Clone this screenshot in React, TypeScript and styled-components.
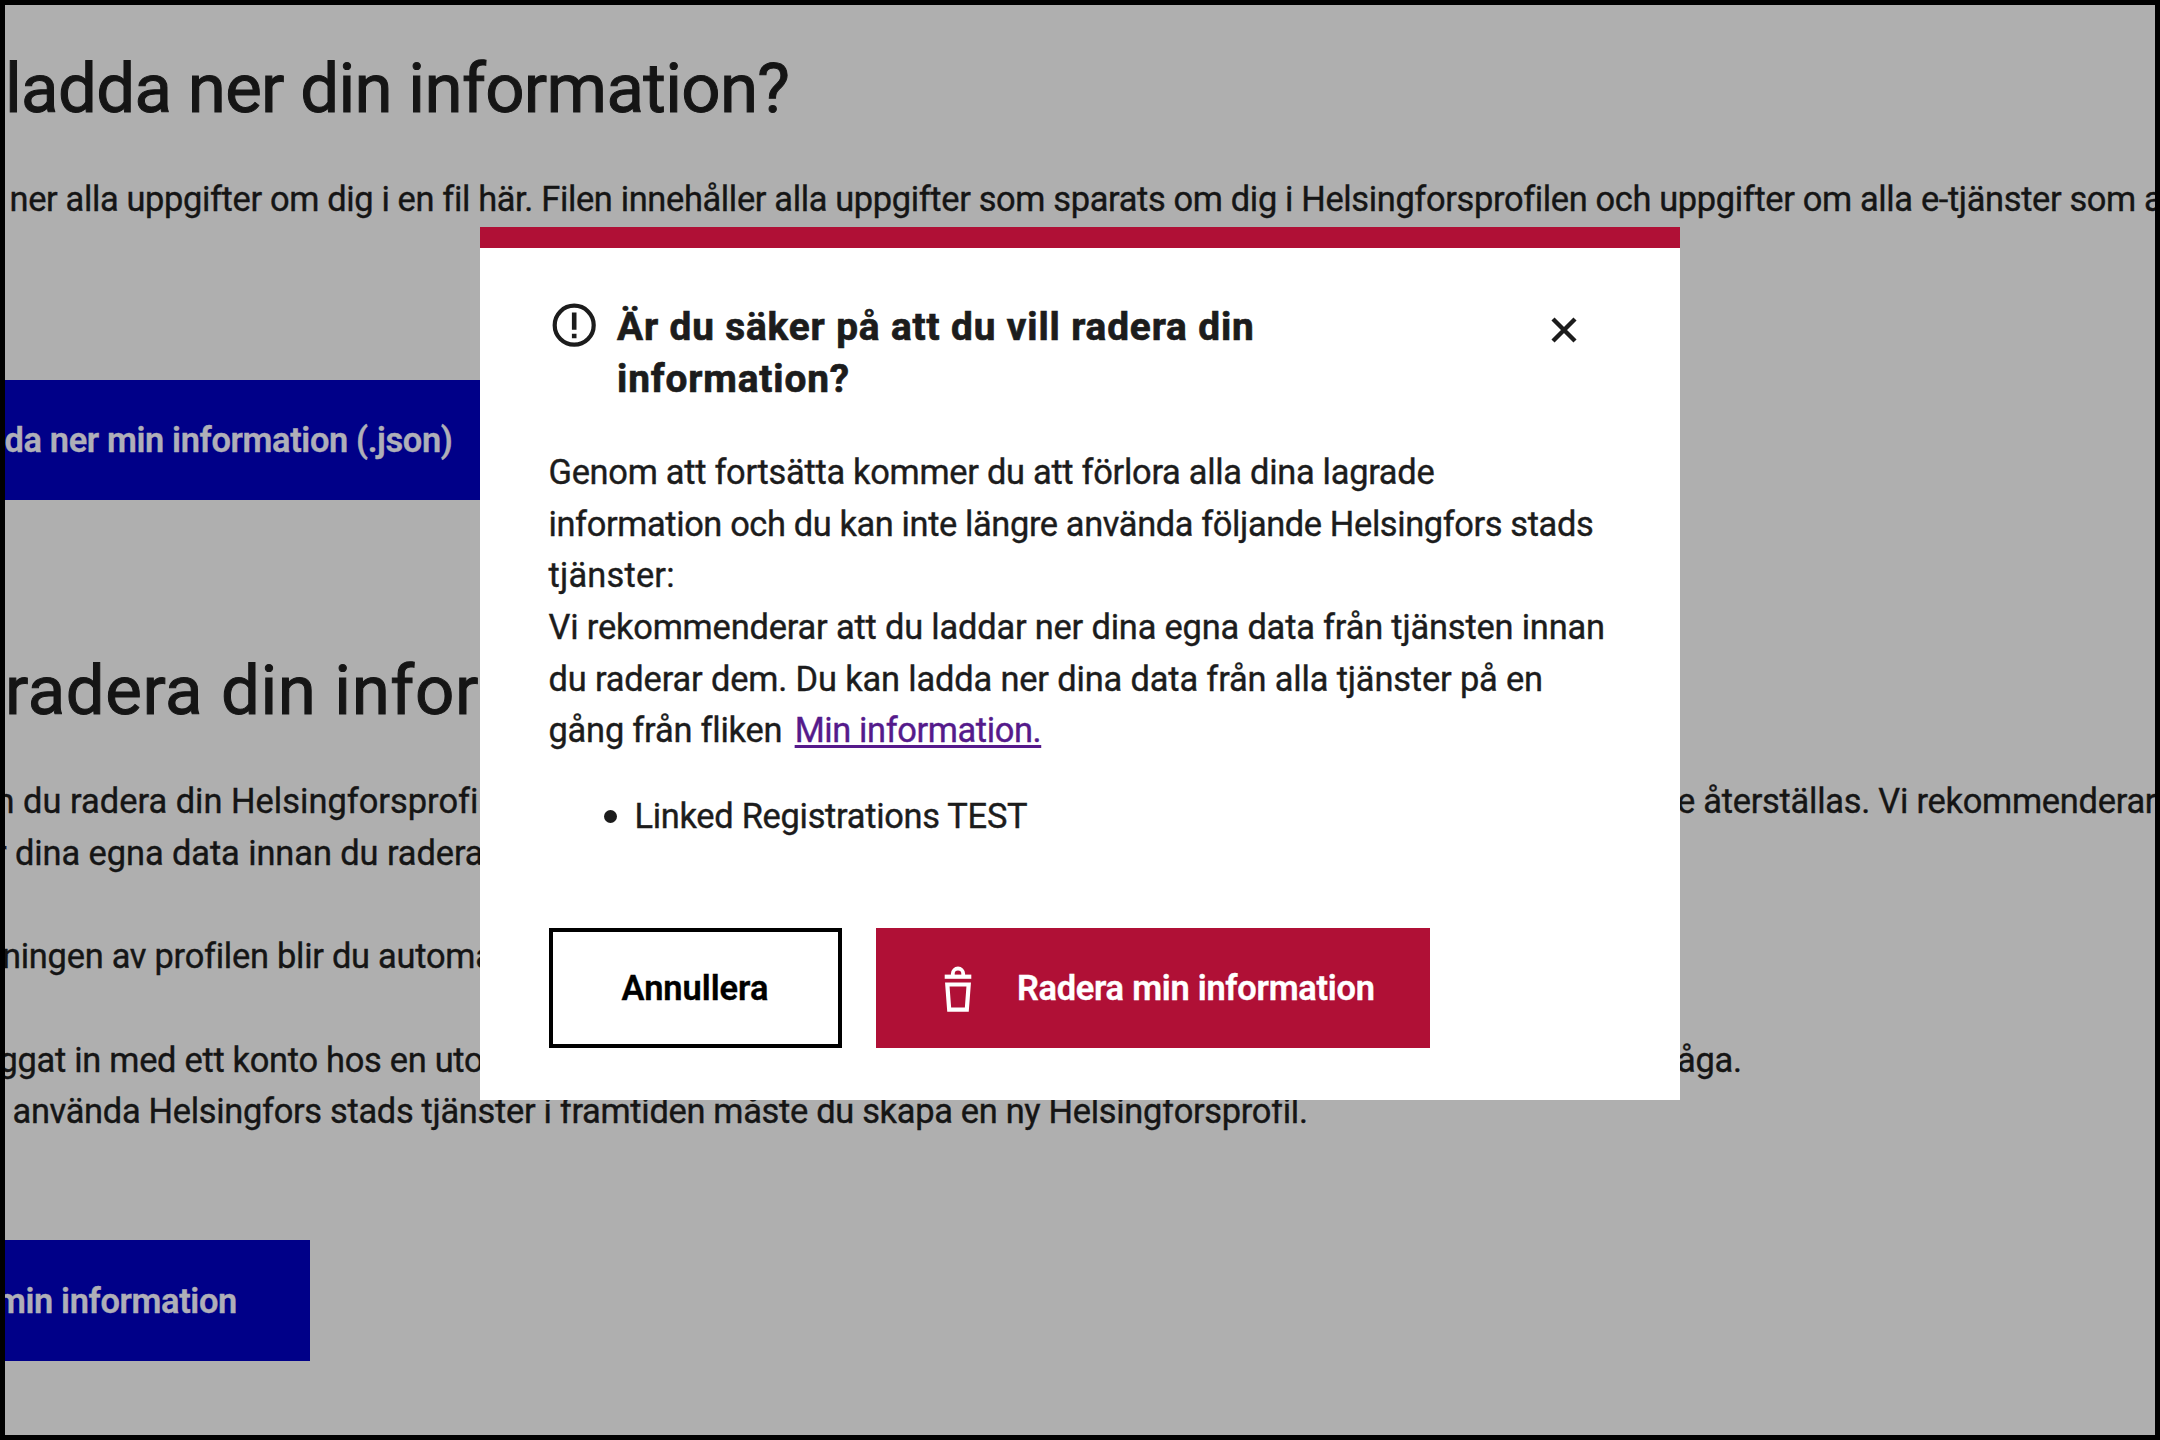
import React from 'react';
import styled, { createGlobalStyle } from 'styled-components';

const GlobalStyle = createGlobalStyle`
  *, *::before, *::after { box-sizing: border-box; }
  body { margin: 0; background: #000; }
`;

const LINE = '51.7px';

const Screen = styled.div`
  position: relative;
  width: 2160px;
  height: 1440px;
  border: 5px solid #000;
  overflow: hidden;
  background: #afafaf;
  color: #151515;
  font-family: Roboto, 'Liberation Sans', sans-serif;
  font-size: 34.4px;
  line-height: ${LINE};
  -webkit-text-stroke: 0.4px currentColor;
`;

const Page = styled.main`
  display: flex;
  flex-direction: column;
  align-items: flex-start;
  padding-top: 44px;
  white-space: nowrap;
`;

const Heading = styled.h2<{ $track: number }>`
  margin: 0;
  font-size: 69px;
  font-weight: 400;
  line-height: 80px;
  letter-spacing: ${p => p.$track}px;
  -webkit-text-stroke-width: 1px;
`;

const Copy = styled.div<{ $top: number }>`
  display: flex;
  flex-direction: column;
  margin-top: ${p => p.$top}px;
`;

const Line = styled.div<{ $indent?: number; $track?: number }>`
  display: grid;
  grid-template-columns: 1672px auto;
  height: ${LINE};
  letter-spacing: -0.25px;

  > span:first-child {
    margin-left: ${p => p.$indent ?? 0}px;
    letter-spacing: ${p => p.$track ?? -0.25}px;
  }
`;

const PageButton = styled.button<{ $top: number; $width: number; $indent: number }>`
  width: ${p => p.$width}px;
  height: 120.6px;
  margin: ${p => p.$top}px 0 0;
  padding: 2px 0 0;
  border: 0;
  background: #000088;
  color: #afafb8;
  font: 600 34.4px/${LINE} Roboto, 'Liberation Sans', sans-serif;
  letter-spacing: -0.36px;
  text-align: left;
  text-indent: ${p => p.$indent}px;
  white-space: nowrap;
`;

const SecondHeading = styled(Heading)`
  margin-top: 150.4px;
`;

const Dialog = styled.section`
  position: absolute;
  top: 222px;
  left: 474.5px;
  width: 1200.5px;
  height: 873.3px;
  padding: 53.4px 68.5px 0 69px;
  border-top: 21.5px solid #b01036;
  background: #fff;
  color: #1c1c1c;
  white-space: nowrap;
`;

const DialogHeader = styled.header`
  display: flex;
  align-items: flex-start;
`;

const HeaderIcon = styled.svg`
  flex: none;
  width: 52px;
  height: 52px;
`;

const AlertIcon = styled(HeaderIcon)`
  margin: -1px 0 0 -0.5px;
`;

const DialogTitle = styled.h3`
  flex: 1;
  margin: 0 0 0 17px;
  font-size: 38.75px;
  font-weight: 700;
  line-height: ${LINE};
  letter-spacing: 0.87px;
  -webkit-text-stroke-width: 0.7px;
`;

const CloseButton = styled.button`
  display: flex;
  margin: 3px 22px 0 0;
  padding: 0;
  border: 0;
  background: none;
  color: inherit;
`;

const DialogText = styled.div`
  margin-top: 42.1px;
`;

const TextLine = styled.div<{ $track: number }>`
  height: ${LINE};
  letter-spacing: ${p => p.$track}px;
`;

const InlineLink = styled.a`
  margin-left: 4px;
  color: #551a8b;
  letter-spacing: -0.38px;
  text-decoration: underline;
  text-decoration-thickness: 3px;
  text-decoration-skip-ink: none;
  text-underline-offset: 3px;
`;

const ServiceList = styled.ul`
  display: flex;
  flex-direction: column;
  margin: 34px 0 0;
  padding: 0 0 0 55.5px;
  list-style: none;
`;

const Service = styled.li`
  display: flex;
  align-items: center;
  gap: 17.5px;
  height: ${LINE};
  letter-spacing: -0.28px;

  &::before {
    content: '';
    flex: none;
    width: 13px;
    height: 13px;
    border-radius: 50%;
    background: currentColor;
  }
`;

const Actions = styled.div`
  display: flex;
  gap: 34.4px;
  margin-top: 85px;
`;

const ActionButton = styled.button<{ $danger?: boolean }>`
  display: flex;
  align-items: center;
  justify-content: ${p => (p.$danger ? 'flex-start' : 'center')};
  gap: 33px;
  width: ${p => (p.$danger ? 554.5 : 293)}px;
  height: 120.6px;
  padding: 2px 0 0 ${p => (p.$danger ? 52 : 0)}px;
  border: 4px solid ${p => (p.$danger ? '#b01036' : '#000')};
  background: ${p => (p.$danger ? '#b01036' : '#fff')};
  color: ${p => (p.$danger ? '#fff' : '#000')};
  font: 600 34.4px/${LINE} Roboto, 'Liberation Sans', sans-serif;
  letter-spacing: ${p => (p.$danger ? -0.25 : 0)}px;
`;

const TrashIcon = styled(HeaderIcon)`
  margin-top: -3px;
`;

export default function App() {
  return (
    <Screen>
      <GlobalStyle />
      <Page>
        <Heading $track={-0.68}>ladda ner din information?</Heading>
        <Copy $top={45.3}>
          <Line $indent={4.5} $track={-0.345}>
            <span>
              ner alla uppgifter om dig i en fil här. Filen innehåller alla uppgifter som sparats om dig i
              Helsingforsprofilen och uppgifter om alla e-tjänster som a
            </span>
          </Line>
        </Copy>
        <PageButton $top={153.6} $width={500} $indent={-0.5}>da ner min information (.json)</PageButton>
        <SecondHeading $track={0.6}>radera din information?</SecondHeading>
        <Copy $top={45.5}>
          <Line $indent={-9.5} $track={0.02}>
            <span>n du radera din Helsingforsprofil</span>
            <span>e återställas. Vi rekommenderar</span>
          </Line>
          <Line $indent={-10} $track={-0.08}><span>r dina egna data innan du raderar</span></Line>
          <Line />
          <Line $indent={-3}><span>ningen av profilen blir du automa</span></Line>
          <Line />
          <Line $indent={-6.5} $track={-0.28}>
            <span>ggat in med ett konto hos en uto</span>
            <span>åga.</span>
          </Line>
          <Line $indent={7.5} $track={-0.3}>
            <span>använda Helsingfors stads tjänster i framtiden måste du skapa en ny Helsingforsprofil.</span>
          </Line>
        </Copy>
        <PageButton $top={102.6} $width={305} $indent={-9}>min information</PageButton>
      </Page>

      <Dialog role="dialog" aria-modal="true">
        <DialogHeader>
          <AlertIcon viewBox="0 0 52 52" fill="none" stroke="currentColor">
            <circle cx="26.2" cy="25.2" r="19.5" strokeWidth="4.2" />
            <path d="M26.2 12.5v17.2M26.2 33.7v4.5" strokeWidth="4.6" />
          </AlertIcon>
          <DialogTitle>Är du säker på att du vill radera din<br />information?</DialogTitle>
          <CloseButton aria-label="Stäng">
            <HeaderIcon viewBox="0 0 52 52" fill="none" stroke="currentColor">
              <path d="M15 15l22 22M37 15L15 37" strokeWidth="4.4" />
            </HeaderIcon>
          </CloseButton>
        </DialogHeader>

        <DialogText>
          <TextLine $track={-0.28}>Genom att fortsätta kommer du att förlora alla dina lagrade</TextLine>
          <TextLine $track={-0.38}>information och du kan inte längre använda följande Helsingfors stads</TextLine>
          <TextLine $track={0.2}>tjänster:</TextLine>
          <TextLine $track={-0.18}>Vi rekommenderar att du laddar ner dina egna data från tjänsten innan</TextLine>
          <TextLine $track={-0.15}>du raderar dem. Du kan ladda ner dina data från alla tjänster på en</TextLine>
          <TextLine $track={-0.2}>
            gång från fliken <InlineLink>Min information.</InlineLink>
          </TextLine>
        </DialogText>

        <ServiceList>
          <Service>Linked Registrations TEST</Service>
        </ServiceList>

        <Actions>
          <ActionButton>Annullera</ActionButton>
          <ActionButton $danger>
            <TrashIcon viewBox="0 0 52 52" fill="none" stroke="currentColor">
              <path d="M20.8 13v-1.3a5 5 0 0 1 10.4 0V13" strokeWidth="3.8" />
              <path d="M12.7 14.7h26.6" strokeWidth="4.2" />
              <path d="M15.3 22.5h21.4l-1.9 25.2H17.2z" strokeWidth="4.2" />
            </TrashIcon>
            Radera min information
          </ActionButton>
        </Actions>
      </Dialog>
    </Screen>
  );
}
